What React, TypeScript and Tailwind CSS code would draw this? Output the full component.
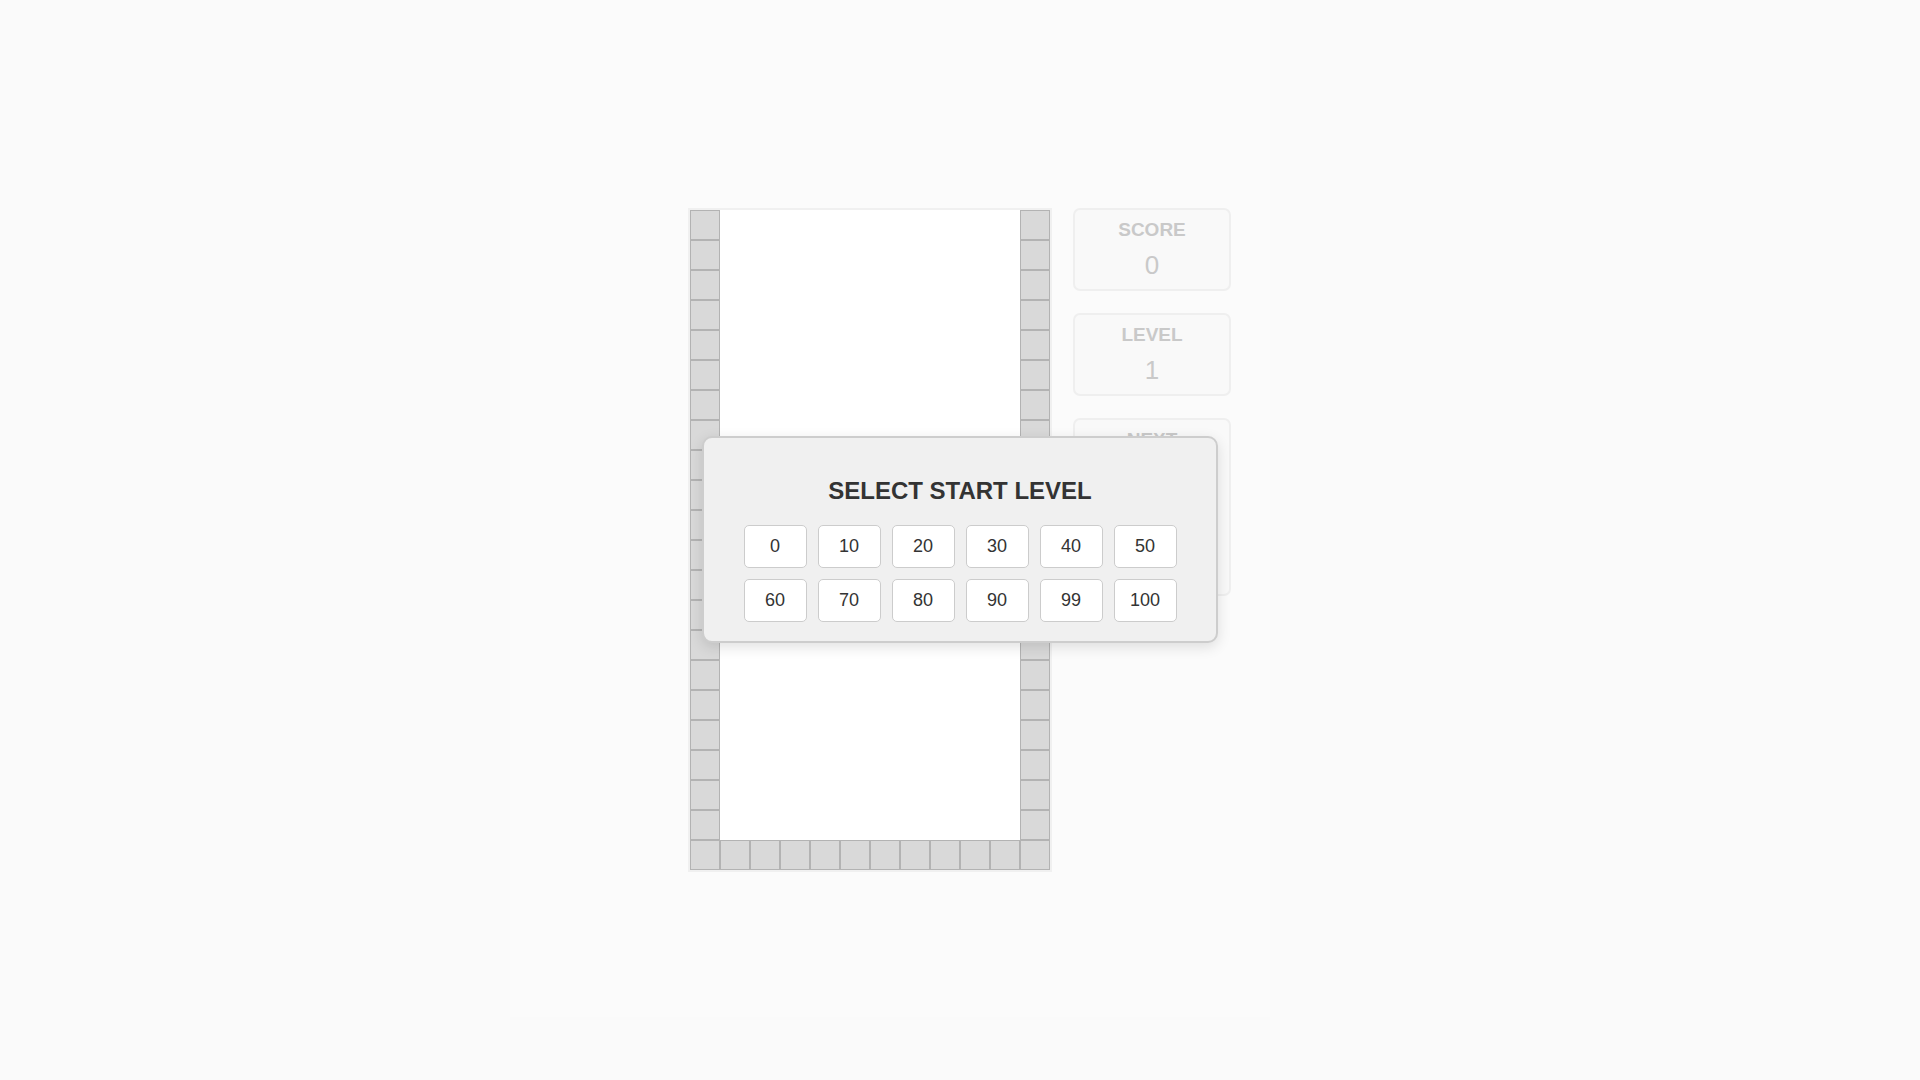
import React from 'react'

const COLS = 12
const ROWS = 22
const LEVELS = [0, 10, 20, 30, 40, 50, 60, 70, 80, 90, 99, 100]

function isWall(r: number, c: number) {
  return c === 0 || c === COLS - 1 || r === ROWS - 1
}

function Board() {
  const cells = []
  for (let r = 0; r < ROWS; r++) {
    for (let c = 0; c < COLS; c++) {
      cells.push(
        <div
          key={`${r}-${c}`}
          className={isWall(r, c) ? 'w-[30px] h-[30px] bg-[#d9d9d9] border border-[#b3b3b3]' : 'w-[30px] h-[30px] bg-white'}
        />
      )
    }
  }
  return (
    <div className="border-2 border-[#f0f0f0] bg-white">
      <div className="grid grid-cols-[repeat(12,30px)]">{cells}</div>
    </div>
  )
}

function StatBox({ label, value }: { label: string; value: string }) {
  return (
    <div className="w-[158px] h-[83px] rounded-[7px] border-2 border-[#efefef] bg-[#f9f9f9] flex flex-col items-center pt-[9px]">
      <span className="text-[19px] leading-[22px] font-bold text-[#c9c9c9]">{label}</span>
      <span className="mt-[9px] text-[26px] leading-[30px] text-[#c9c9c9]">{value}</span>
    </div>
  )
}

export default function App() {
  return (
    <div className="min-h-screen bg-[#fafafa] font-['Liberation_Sans',Arial,sans-serif]">
      <div className="ml-[510px] w-[760px] h-[1017px] bg-[#fbfbfb] pt-[208px]">
        <div className="relative ml-[178px] flex gap-[21px] w-fit">
          <Board />
          <div className="flex flex-col gap-[22px]">
            <StatBox label="SCORE" value="0" />
            <StatBox label="LEVEL" value="1" />
            <div className="w-[158px] h-[178px] rounded-[7px] border-2 border-[#efefef] bg-[#f9f9f9] flex flex-col items-center pt-[9px]">
              <span className="text-[19px] leading-[22px] font-bold text-[#c9c9c9]">NEXT</span>
            </div>
          </div>

          <div className="absolute left-[14px] top-[228px] w-[516px] rounded-[10px] border-2 border-[#cdcdcd] bg-[#f0f0f0] shadow-[0_4px_14px_rgba(0,0,0,0.12)] flex flex-col items-center pt-[39px] pb-[19px]">
            <h2 className="text-[24px] leading-[28px] font-bold text-[#333333] mb-[20px]">SELECT START LEVEL</h2>
            <div className="grid grid-cols-6 gap-x-[11px] gap-y-[11px]">
              {LEVELS.map((lv) => (
                <button
                  key={lv}
                  className="w-[63px] h-[43px] rounded-[5px] bg-white border border-[#cccccc] text-[18px] text-[#333333] flex items-center justify-center"
                >
                  {lv}
                </button>
              ))}
            </div>
          </div>
        </div>
      </div>
    </div>
  )
}
